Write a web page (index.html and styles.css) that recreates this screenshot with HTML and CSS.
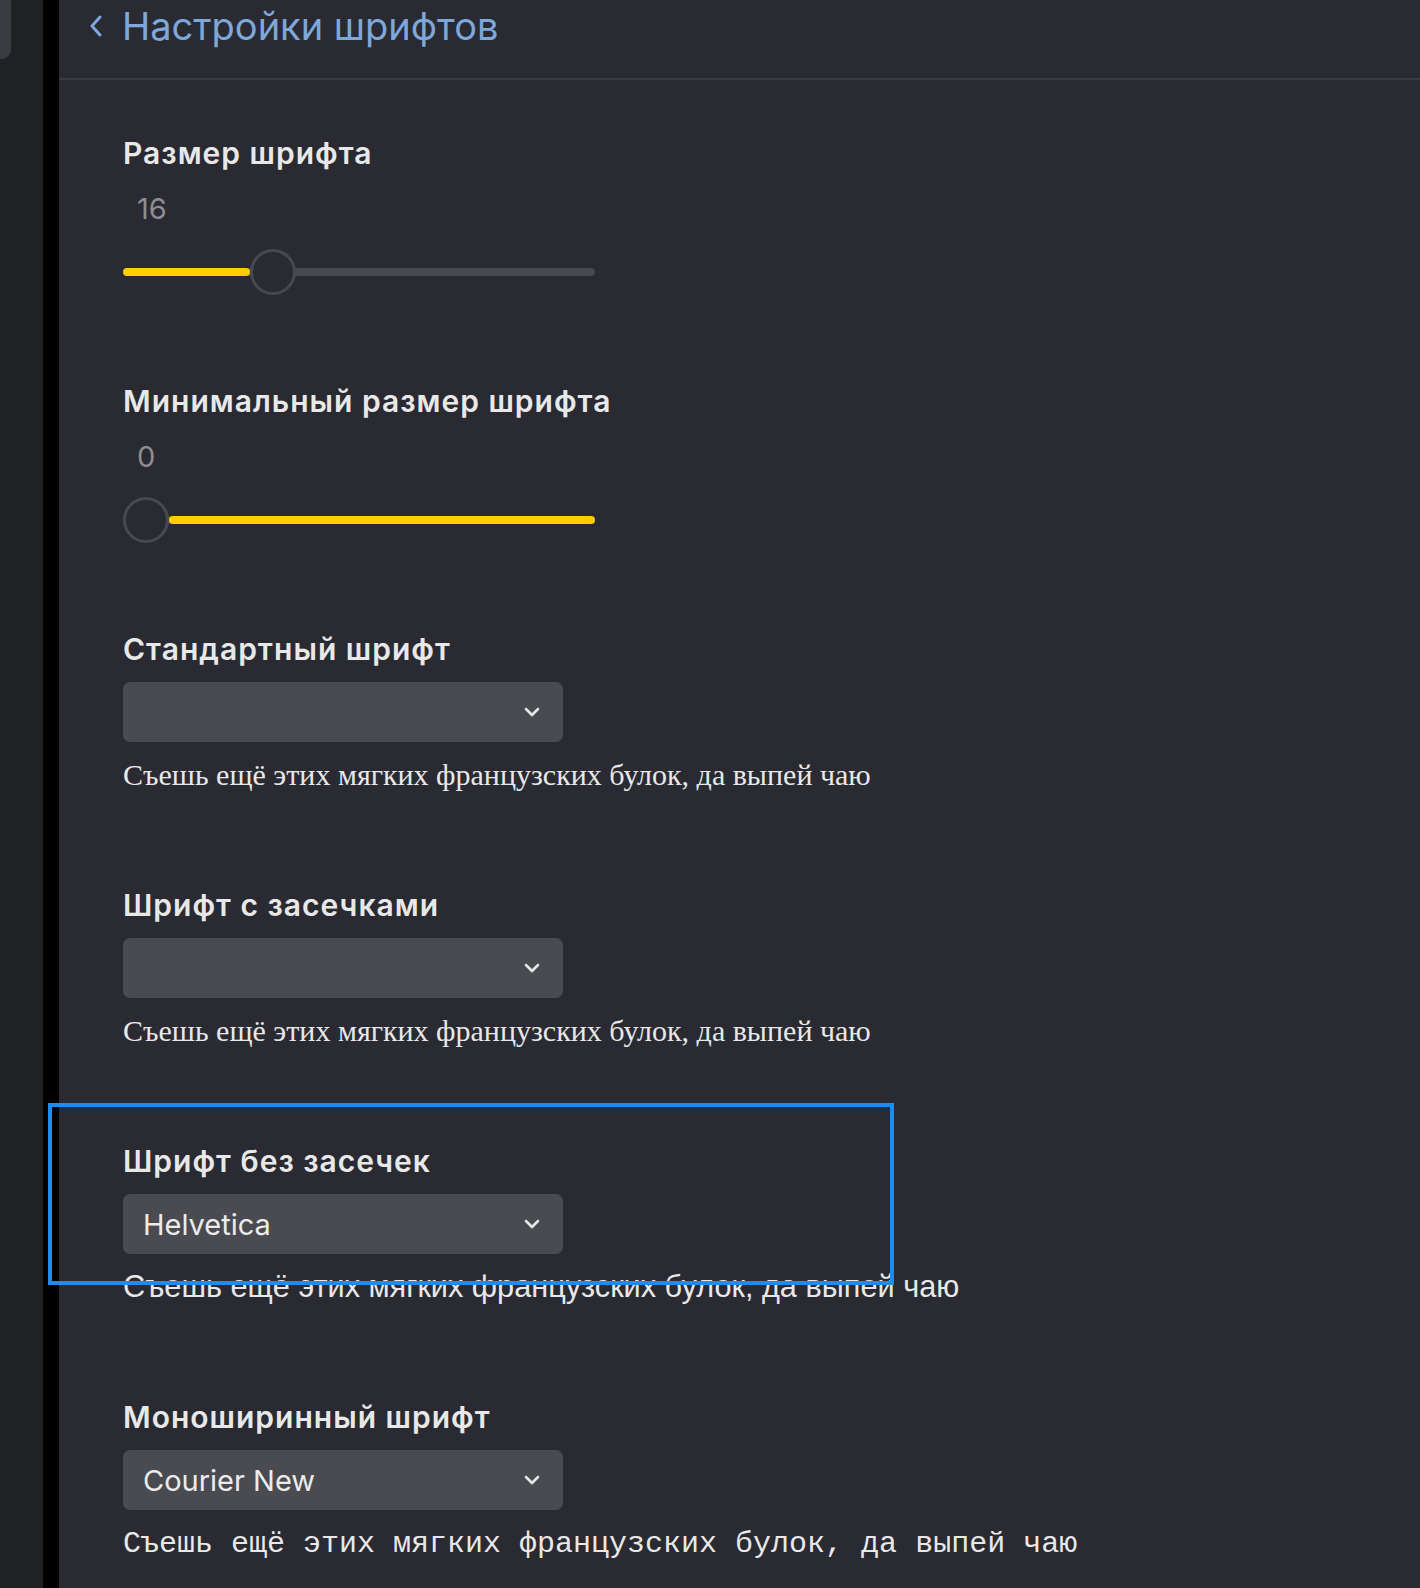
FILE: index.html
```html
<!DOCTYPE html>
<html lang="ru">
<head>
<meta charset="utf-8">
<title>Настройки шрифтов</title>
<link rel="stylesheet" href="styles.css">
</head>
<body>
<div class="app">
  <aside class="sidebar"><div class="sidebar-thumb"></div></aside>
  <div class="divider"></div>
  <main class="main">
    <header class="header">
      <svg class="back" width="14" height="22" viewBox="0 0 14 22"><path d="M11 2 L3 11 L11 20" fill="none" stroke="#7ea8da" stroke-width="3" stroke-linecap="round" stroke-linejoin="round"/></svg>
      <h1 class="page-title">Настройки шрифтов</h1>
    </header>
    <div class="content">
      <section class="sec sec-slider">
        <h2 class="sec-title">Размер шрифта</h2>
        <div class="value">16</div>
        <div class="slider">
          <div class="track"></div>
          <div class="fill" style="left:0;width:127px"></div>
          <div class="thumb" style="left:127px"></div>
        </div>
      </section>
      <section class="sec sec-slider">
        <h2 class="sec-title">Минимальный размер шрифта</h2>
        <div class="value">0</div>
        <div class="slider">
          <div class="track"></div>
          <div class="fill" style="left:46px;width:426px"></div>
          <div class="thumb" style="left:0"></div>
        </div>
      </section>
      <section class="sec">
        <h2 class="sec-title">Стандартный шрифт</h2>
        <div class="select"><span class="select-text"></span><svg class="chev" width="16" height="10" viewBox="0 0 16 10"><path d="M2 2 L8 8 L14 2" fill="none" stroke="#e6e6e6" stroke-width="2.6" stroke-linecap="round" stroke-linejoin="round"/></svg></div>
        <p class="sample serif">Съешь ещё этих мягких французских булок, да выпей чаю</p>
      </section>
      <section class="sec">
        <h2 class="sec-title">Шрифт с засечками</h2>
        <div class="select"><span class="select-text"></span><svg class="chev" width="16" height="10" viewBox="0 0 16 10"><path d="M2 2 L8 8 L14 2" fill="none" stroke="#e6e6e6" stroke-width="2.6" stroke-linecap="round" stroke-linejoin="round"/></svg></div>
        <p class="sample serif">Съешь ещё этих мягких французских булок, да выпей чаю</p>
      </section>
      <section class="sec">
        <div class="highlight"></div>
        <h2 class="sec-title">Шрифт без засечек</h2>
        <div class="select"><span class="select-text">Helvetica</span><svg class="chev" width="16" height="10" viewBox="0 0 16 10"><path d="M2 2 L8 8 L14 2" fill="none" stroke="#e6e6e6" stroke-width="2.6" stroke-linecap="round" stroke-linejoin="round"/></svg></div>
        <p class="sample sans">Съешь ещё этих мягких французских булок, да выпей чаю</p>
      </section>
      <section class="sec">
        <h2 class="sec-title">Моноширинный шрифт</h2>
        <div class="select"><span class="select-text">Courier New</span><svg class="chev" width="16" height="10" viewBox="0 0 16 10"><path d="M2 2 L8 8 L14 2" fill="none" stroke="#e6e6e6" stroke-width="2.6" stroke-linecap="round" stroke-linejoin="round"/></svg></div>
        <p class="sample mono">Съешь ещё этих мягких французских булок, да выпей чаю</p>
      </section>
    </div>
  </main>
</div>
</body>
</html>
```
FILE: styles.css
```css
html, body {
  margin: 0;
  padding: 0;
  height: 100%;
  background: #292a32;
  font-family: Inter, "Liberation Sans", Arial, sans-serif;
  color: #e6e6e6;
  overflow: hidden;
}
.app {
  display: flex;
  min-height: 1588px;
}
.sidebar {
  width: 43px;
  flex: none;
  background: #202125;
}
.sidebar-thumb {
  width: 11px;
  height: 59px;
  background: #3a3b40;
  border-bottom-right-radius: 9px;
}
.divider {
  width: 16px;
  flex: none;
  background: #000;
}
.main {
  flex: 1;
  background: #292a32;
}
.header {
  height: 80px;
  box-sizing: border-box;
  border-bottom: 2px solid #3b3c42;
  display: flex;
  align-items: flex-start;
  padding: 3px 0 0 30px;
}
.back {
  margin-top: 12px;
  margin-right: 19px;
  flex: none;
}
.page-title {
  margin: 0;
  font-weight: 400;
  font-size: 38px;
  line-height: 46px;
  color: #7ea8da;
}
.content {
  padding: 55px 0 40px 64px;
  display: flex;
  flex-direction: column;
  gap: 94px;
}
.sec {
  display: flex;
  flex-direction: column;
  align-items: flex-start;
  position: relative;
}
.sec-title {
  margin: 0;
  font-size: 30px;
  line-height: 36px;
  font-weight: 600;
  letter-spacing: 1px;
  color: #e8e8e8;
}
.value {
  margin: 20px 0 0 14px;
  font-size: 29px;
  line-height: 36px;
  color: #8d8d92;
}
.slider {
  position: relative;
  width: 472px;
  height: 33px;
  margin-top: 29px;
}
.track {
  position: absolute;
  left: 0;
  right: 0;
  top: 12px;
  height: 8px;
  border-radius: 4px;
  background: #48494e;
}
.fill {
  position: absolute;
  top: 12px;
  height: 8px;
  border-radius: 4px;
  background: #ffcc00;
}
.thumb {
  position: absolute;
  top: -7px;
  width: 46px;
  height: 46px;
  box-sizing: border-box;
  border-radius: 50%;
  border: 3px solid #48494e;
  background: #292a32;
}
.select {
  margin-top: 15px;
  width: 440px;
  height: 60px;
  box-sizing: border-box;
  background: #4a4b50;
  border-radius: 7px;
  display: flex;
  align-items: center;
  justify-content: space-between;
  padding: 0 23px 0 20px;
}
.select-text {
  font-size: 29px;
  color: #ececec;
}
.chev {
  flex: none;
}
.sample {
  margin: 15px 0 0 0;
  font-size: 30px;
  line-height: 36px;
  color: #e8e8e8;
  white-space: nowrap;
}
.serif {
  font-family: "Liberation Serif", "Times New Roman", serif;
}
.sans {
  font-family: "Liberation Sans", Arial, sans-serif;
  font-size: 30.7px;
}
.mono {
  font-family: "Liberation Mono", "Courier New", monospace;
  margin-top: 16px;
}
.highlight {
  position: absolute;
  left: -75px;
  top: -40px;
  width: 846px;
  height: 182px;
  box-sizing: border-box;
  border: 4px solid #1b8cf2;
  pointer-events: none;
}
```
